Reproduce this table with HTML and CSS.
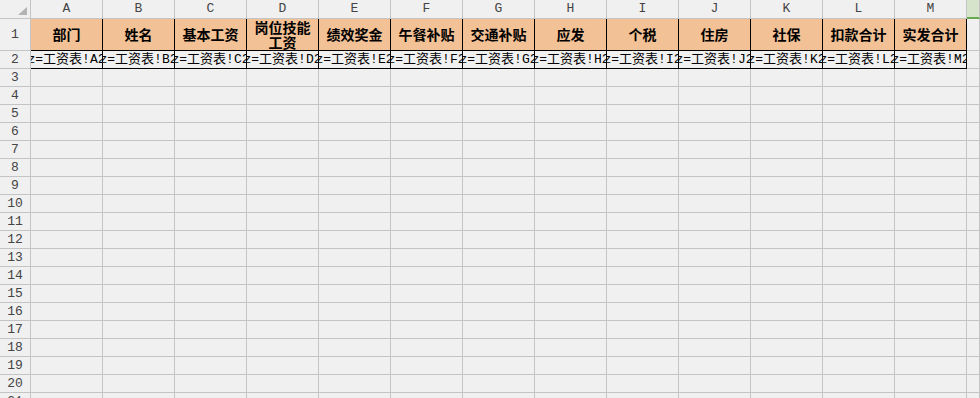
FILE: index.html
```html
<!DOCTYPE html>
<html lang="zh">
<head>
<meta charset="utf-8">
<title>工资表</title>
<link rel="stylesheet" href="styles.css">
</head>
<body>
<div class="sheet">
  <div class="row colhead">
    <div class="corner"><span class="tri"></span></div>
    <div class="ch">A</div><div class="ch">B</div><div class="ch">C</div><div class="ch">D</div><div class="ch">E</div><div class="ch">F</div><div class="ch">G</div><div class="ch">H</div><div class="ch">I</div><div class="ch">J</div><div class="ch">K</div><div class="ch">L</div><div class="ch">M</div>
    <div class="ch sel"></div>
  </div>
  <div class="row r1">
    <div class="rh">1</div>
    <div class="h">部门</div><div class="h">姓名</div><div class="h">基本工资</div><div class="h">岗位技能<br>工资</div><div class="h">绩效奖金</div><div class="h">午餐补贴</div><div class="h">交通补贴</div><div class="h">应发</div><div class="h">个税</div><div class="h">住房</div><div class="h">社保</div><div class="h">扣款合计</div><div class="h">实发合计</div>
    <div class="c"></div>
  </div>
  <div class="row r2">
    <div class="rh">2</div>
    <div class="d"><span>z=工资表!A2</span></div><div class="d"><span>z=工资表!B2</span></div><div class="d"><span>z=工资表!C2</span></div><div class="d"><span>z=工资表!D2</span></div><div class="d"><span>z=工资表!E2</span></div><div class="d"><span>z=工资表!F2</span></div><div class="d"><span>z=工资表!G2</span></div><div class="d"><span>z=工资表!H2</span></div><div class="d"><span>z=工资表!I2</span></div><div class="d"><span>z=工资表!J2</span></div><div class="d"><span>z=工资表!K2</span></div><div class="d"><span>z=工资表!L2</span></div><div class="d"><span>z=工资表!M2</span></div>
    <div class="c"></div>
  </div>
  <div class="row"><div class="rh">3</div><div class="c"></div><div class="c"></div><div class="c"></div><div class="c"></div><div class="c"></div><div class="c"></div><div class="c"></div><div class="c"></div><div class="c"></div><div class="c"></div><div class="c"></div><div class="c"></div><div class="c"></div><div class="c"></div></div>
  <div class="row"><div class="rh">4</div><div class="c"></div><div class="c"></div><div class="c"></div><div class="c"></div><div class="c"></div><div class="c"></div><div class="c"></div><div class="c"></div><div class="c"></div><div class="c"></div><div class="c"></div><div class="c"></div><div class="c"></div><div class="c"></div></div>
  <div class="row"><div class="rh">5</div><div class="c"></div><div class="c"></div><div class="c"></div><div class="c"></div><div class="c"></div><div class="c"></div><div class="c"></div><div class="c"></div><div class="c"></div><div class="c"></div><div class="c"></div><div class="c"></div><div class="c"></div><div class="c"></div></div>
  <div class="row"><div class="rh">6</div><div class="c"></div><div class="c"></div><div class="c"></div><div class="c"></div><div class="c"></div><div class="c"></div><div class="c"></div><div class="c"></div><div class="c"></div><div class="c"></div><div class="c"></div><div class="c"></div><div class="c"></div><div class="c"></div></div>
  <div class="row"><div class="rh">7</div><div class="c"></div><div class="c"></div><div class="c"></div><div class="c"></div><div class="c"></div><div class="c"></div><div class="c"></div><div class="c"></div><div class="c"></div><div class="c"></div><div class="c"></div><div class="c"></div><div class="c"></div><div class="c"></div></div>
  <div class="row"><div class="rh">8</div><div class="c"></div><div class="c"></div><div class="c"></div><div class="c"></div><div class="c"></div><div class="c"></div><div class="c"></div><div class="c"></div><div class="c"></div><div class="c"></div><div class="c"></div><div class="c"></div><div class="c"></div><div class="c"></div></div>
  <div class="row"><div class="rh">9</div><div class="c"></div><div class="c"></div><div class="c"></div><div class="c"></div><div class="c"></div><div class="c"></div><div class="c"></div><div class="c"></div><div class="c"></div><div class="c"></div><div class="c"></div><div class="c"></div><div class="c"></div><div class="c"></div></div>
  <div class="row"><div class="rh">10</div><div class="c"></div><div class="c"></div><div class="c"></div><div class="c"></div><div class="c"></div><div class="c"></div><div class="c"></div><div class="c"></div><div class="c"></div><div class="c"></div><div class="c"></div><div class="c"></div><div class="c"></div><div class="c"></div></div>
  <div class="row"><div class="rh">11</div><div class="c"></div><div class="c"></div><div class="c"></div><div class="c"></div><div class="c"></div><div class="c"></div><div class="c"></div><div class="c"></div><div class="c"></div><div class="c"></div><div class="c"></div><div class="c"></div><div class="c"></div><div class="c"></div></div>
  <div class="row"><div class="rh">12</div><div class="c"></div><div class="c"></div><div class="c"></div><div class="c"></div><div class="c"></div><div class="c"></div><div class="c"></div><div class="c"></div><div class="c"></div><div class="c"></div><div class="c"></div><div class="c"></div><div class="c"></div><div class="c"></div></div>
  <div class="row"><div class="rh">13</div><div class="c"></div><div class="c"></div><div class="c"></div><div class="c"></div><div class="c"></div><div class="c"></div><div class="c"></div><div class="c"></div><div class="c"></div><div class="c"></div><div class="c"></div><div class="c"></div><div class="c"></div><div class="c"></div></div>
  <div class="row"><div class="rh">14</div><div class="c"></div><div class="c"></div><div class="c"></div><div class="c"></div><div class="c"></div><div class="c"></div><div class="c"></div><div class="c"></div><div class="c"></div><div class="c"></div><div class="c"></div><div class="c"></div><div class="c"></div><div class="c"></div></div>
  <div class="row"><div class="rh">15</div><div class="c"></div><div class="c"></div><div class="c"></div><div class="c"></div><div class="c"></div><div class="c"></div><div class="c"></div><div class="c"></div><div class="c"></div><div class="c"></div><div class="c"></div><div class="c"></div><div class="c"></div><div class="c"></div></div>
  <div class="row"><div class="rh">16</div><div class="c"></div><div class="c"></div><div class="c"></div><div class="c"></div><div class="c"></div><div class="c"></div><div class="c"></div><div class="c"></div><div class="c"></div><div class="c"></div><div class="c"></div><div class="c"></div><div class="c"></div><div class="c"></div></div>
  <div class="row"><div class="rh">17</div><div class="c"></div><div class="c"></div><div class="c"></div><div class="c"></div><div class="c"></div><div class="c"></div><div class="c"></div><div class="c"></div><div class="c"></div><div class="c"></div><div class="c"></div><div class="c"></div><div class="c"></div><div class="c"></div></div>
  <div class="row"><div class="rh">18</div><div class="c"></div><div class="c"></div><div class="c"></div><div class="c"></div><div class="c"></div><div class="c"></div><div class="c"></div><div class="c"></div><div class="c"></div><div class="c"></div><div class="c"></div><div class="c"></div><div class="c"></div><div class="c"></div></div>
  <div class="row"><div class="rh">19</div><div class="c"></div><div class="c"></div><div class="c"></div><div class="c"></div><div class="c"></div><div class="c"></div><div class="c"></div><div class="c"></div><div class="c"></div><div class="c"></div><div class="c"></div><div class="c"></div><div class="c"></div><div class="c"></div></div>
  <div class="row"><div class="rh">20</div><div class="c"></div><div class="c"></div><div class="c"></div><div class="c"></div><div class="c"></div><div class="c"></div><div class="c"></div><div class="c"></div><div class="c"></div><div class="c"></div><div class="c"></div><div class="c"></div><div class="c"></div><div class="c"></div></div>
  <div class="row"><div class="rh">21</div><div class="c"></div><div class="c"></div><div class="c"></div><div class="c"></div><div class="c"></div><div class="c"></div><div class="c"></div><div class="c"></div><div class="c"></div><div class="c"></div><div class="c"></div><div class="c"></div><div class="c"></div><div class="c"></div></div>
</div>
</body>
</html>
```
FILE: styles.css
```css
html, body {
  margin: 0;
  padding: 0;
  background: #f0f0f0;
  overflow: hidden;
}
.sheet {
  width: 980px;
  height: 398px;
  overflow: hidden;
  font-family: "Liberation Mono", "Noto Sans CJK SC", monospace;
}
.row {
  display: grid;
  grid-template-columns: 31px repeat(13, 72px) 1fr;
  height: 18px;
}
.row > div {
  box-sizing: border-box;
  border-right: 1px solid #c4c4c4;
  border-bottom: 1px solid #c4c4c4;
  overflow: hidden;
  white-space: nowrap;
}
.colhead {
  height: 19px;
}
.corner {
  position: relative;
}
.tri {
  position: absolute;
  right: 3px;
  bottom: 3px;
  width: 0;
  height: 0;
  border-left: 9px solid transparent;
  border-bottom: 8px solid #b3b3b3;
}
.ch {
  font-size: 13px;
  line-height: 18px;
  color: #444;
  text-align: center;
}
.row > .ch.sel {
  background: #d5e4cb;
  border-bottom: 2px solid #6aa84f;
}
.rh {
  font-size: 13px;
  line-height: 17px;
  color: #444;
  text-align: center;
}
.r1 {
  height: 32px;
}
.r1 .rh {
  line-height: 31px;
}
.row > .h {
  background: #f2c195;
  border-color: #000;
  font-family: "Noto Sans CJK SC", sans-serif;
  font-weight: 700;
  font-size: 14px;
  line-height: 15px;
  color: #000;
  display: flex;
  align-items: center;
  justify-content: center;
  text-align: center;
}
.row > .d {
  border-color: #000;
  display: flex;
  justify-content: center;
  align-items: center;
  font-size: 13px;
  color: #000;
}
.d span {
  flex: none;
  line-height: 17px;
}
```
